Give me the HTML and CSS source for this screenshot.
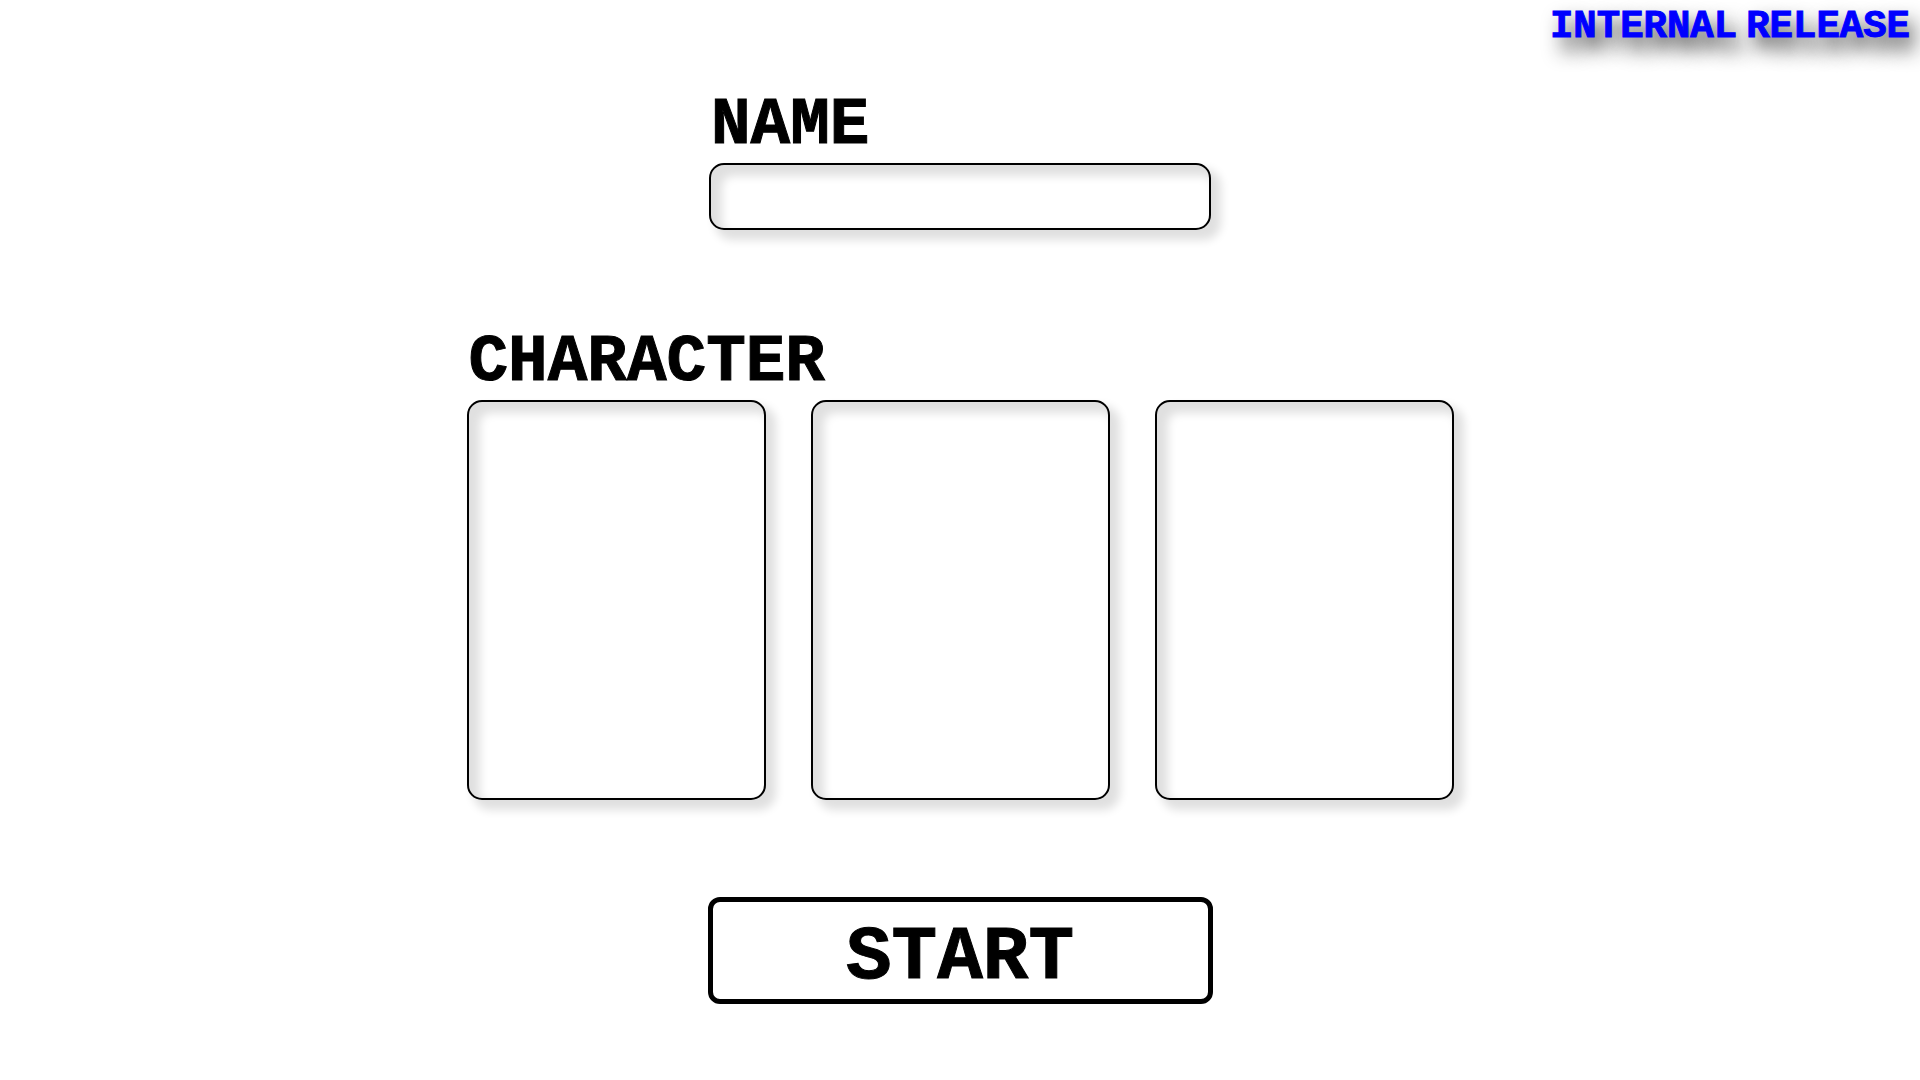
FILE: index.html
```html
<!DOCTYPE html>
<html lang="en">
<head>
  <meta charset="utf-8">
  <meta name="viewport" content="width=device-width, initial-scale=1">
  <title>Character select</title>
  <link rel="stylesheet" href="styles.css">
</head>
<body>
  <header class="banner"><span>INTERNAL</span> <span>RELEASE</span></header>
  <main>
    <form class="setup">
      <div class="name-field">
        <label class="heading" for="name">NAME</label>
        <input class="panel name-input" id="name" type="text" autocomplete="off">
      </div>
      <div class="character-field" role="radiogroup" aria-labelledby="character">
        <div class="heading" id="character">CHARACTER</div>
        <div class="cards">
          <input class="panel card" type="radio" name="character" value="1" aria-label="Character 1">
          <input class="panel card" type="radio" name="character" value="2" aria-label="Character 2">
          <input class="panel card" type="radio" name="character" value="3" aria-label="Character 3">
        </div>
      </div>
      <button class="start" type="button">START</button>
    </form>
  </main>
</body>
</html>
```
FILE: styles.css
```css
* {
  box-sizing: border-box;
}

body {
  margin: 0;
  background: #fff;
  color: #000;
  font-family: "Liberation Mono", monospace;
  font-weight: bold;
}

.banner {
  display: flex;
  justify-content: flex-end;
  gap: 9px;
  padding: 5px 10px 0;
  color: #00f;
  font-size: 39px;
  line-height: 44px;
  -webkit-text-stroke: 1px #00f;
  text-shadow: 8px 12px 20px rgba(0, 0, 0, 0.9);
}

.setup {
  display: flex;
  flex-direction: column;
  align-items: center;
  padding: 38px 16px 72px;
}

.heading {
  display: block;
  padding: 2px 2px 0;
  font-size: 66px;
  line-height: 74px;
  -webkit-text-stroke: 1px #000;
}

.panel {
  appearance: none;
  display: block;
  margin: 0;
  border: 2px solid #000;
  border-radius: 15px;
  background: #fff;
  box-shadow: 8px 8px 10px 2px #e0e0e0, inset 8px 8px 10px 3px #e0e0e0;
}

.name-field {
  width: 100%;
  max-width: 502px;
}

.name-input {
  width: 100%;
  height: 67px;
  padding: 0 20px;
  font: inherit;
  font-size: 40px;
}

.character-field {
  width: 100%;
  max-width: 987px;
  margin: 94px 0 97px;
}

.cards {
  display: grid;
  grid-template-columns: repeat(3, 1fr);
  gap: 45px;
}

.card {
  width: 100%;
  height: 400px;
  cursor: pointer;
}

.start {
  width: 100%;
  max-width: 505px;
  padding: 15px 0 0;
  border: 5px solid #000;
  border-radius: 12px;
  background: #fff;
  color: #000;
  font: inherit;
  font-size: 76px;
  line-height: 82px;
  -webkit-text-stroke: 1px #000;
  cursor: pointer;
}
```
